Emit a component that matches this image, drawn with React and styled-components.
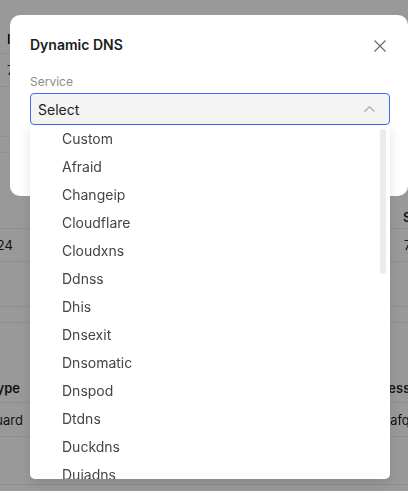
import React from 'react';
import styled, { createGlobalStyle } from 'styled-components';

const GlobalStyle = createGlobalStyle`
  html, body {
    margin: 0;
    padding: 0;
    overflow: hidden;
    background: #fff;
    font-family: Inter, "Noto Sans", sans-serif;
    color: #1f1f1f;
  }
`;

const services = [
  'Custom', 'Afraid', 'Changeip', 'Cloudflare', 'Cloudxns', 'Ddnss', 'Dhis',
  'Dnsexit', 'Dnsomatic', 'Dnspod', 'Dtdns', 'Duckdns', 'Duiadns', 'Dyndns1',
  'Dyndns2', 'Easydns', 'Freedns', 'Gandi', 'Godaddy', 'Googledomains', 'He',
  'Namecheap', 'Noip', 'Nsupdate', 'Ovh', 'Porkbun', 'Yandex', 'Zoneedit1',
];

// rows of the settings tables behind the dialog
const tableRows = [
  { h: 25 },
  { h: 29, line: true, head: true, left: { text: 'IP', at: 7 } },
  { h: 33, line: true, left: { text: '7', at: 7 } },
  { h: 50, line: true },
  { h: 16, line: true },
  { h: 52 },
  { h: 24, line: true, head: true, right: { text: 'Status', at: 403 } },
  { h: 33, line: true, left: { text: '10.8.0.1/24', end: 13 }, right: { text: '7 days', at: 404 } },
  { h: 45, line: true },
  { h: 16, line: true },
  { h: 50 },
  { h: 30, line: true, head: true, left: { text: 'Type', end: 20 }, right: { text: 'Address', at: 358 } },
  { h: 34, line: true, left: { text: 'Wireguard', end: 23 }, right: { text: 'kafqM2xVt', at: 383 } },
  { h: 48, line: true },
];

function BackgroundTable() {
  return (
    <Page>
      {tableRows.map((r, i) => (
        <TableRow key={i} $h={r.h} $line={r.line} $head={r.head}>
          {r.left && (
            r.left.end
              ? <EndCell $w={r.left.end}>{r.left.text}</EndCell>
              : <StartCell $x={r.left.at}>{r.left.text}</StartCell>
          )}
          {r.right && <StartCell $x={r.right.at}>{r.right.text}</StartCell>}
        </TableRow>
      ))}
    </Page>
  );
}

function CloseIcon() {
  return (
    <svg width="12" height="12" viewBox="0 0 12 12">
      <path d="M0.5 0.5 L11.5 11.5 M11.5 0.5 L0.5 11.5" stroke="#6b6b6b" strokeWidth="1.2" fill="none" />
    </svg>
  );
}

function ChevronUp() {
  return (
    <svg width="11" height="6" viewBox="0 0 11 6">
      <path d="M0.5 5.5 L5.5 0.8 L10.5 5.5" stroke="#a8a8a8" strokeWidth="1.2" fill="none" />
    </svg>
  );
}

export default function App() {
  return (
    <>
      <GlobalStyle />
      <BackgroundTable />
      <Overlay>
        <Modal>
          <ModalHeader>
            <Title>Dynamic DNS</Title>
            <CloseButton><CloseIcon /></CloseButton>
          </ModalHeader>
          <Label>Service</Label>
          <SelectWrap>
            <SelectBox>
              <span>Select</span>
              <ChevronUp />
            </SelectBox>
            <Dropdown>
              <OptionList>
                {services.map((s) => (
                  <Option key={s}>{s}</Option>
                ))}
              </OptionList>
              <ScrollThumb />
            </Dropdown>
          </SelectWrap>
        </Modal>
      </Overlay>
    </>
  );
}

const Page = styled.div`
  display: flex;
  flex-direction: column;
  width: 408px;
  font-size: 13px;
`;

const TableRow = styled.div`
  display: flex;
  align-items: center;
  height: ${p => p.$h}px;
  box-sizing: border-box;
  border-bottom: ${p => (p.$line ? '1px solid #ededed' : 'none')};
  font-weight: ${p => (p.$head ? 600 : 400)};
  white-space: nowrap;
`;

const StartCell = styled.div`
  position: fixed;
  left: ${p => p.$x}px;
`;

const EndCell = styled.div`
  display: flex;
  justify-content: flex-end;
  width: ${p => p.$w}px;
  flex-shrink: 0;
`;

const Overlay = styled.div`
  position: fixed;
  inset: 0;
  background: rgba(0, 0, 0, 0.4);
  display: flex;
  align-items: flex-start;
  padding: 15px 0 0 10px;
`;

const Modal = styled.div`
  width: 398px;
  box-sizing: border-box;
  background: #fff;
  border-radius: 10px;
  padding: 20px 18px 71px 20px;
`;

const ModalHeader = styled.div`
  display: flex;
  align-items: center;
  justify-content: space-between;
  height: 20px;
`;

const Title = styled.div`
  font-size: 14px;
  font-weight: 600;
  color: #1d1d1d;
  line-height: 20px;
`;

const CloseButton = styled.div`
  display: flex;
  margin: 2px 4px 0 0;
`;

const Label = styled.div`
  margin-top: 18px;
  font-size: 12px;
  line-height: 18px;
  color: #8c8c8c;
`;

const SelectWrap = styled.div`
  position: relative;
  margin-top: 2px;
`;

const SelectBox = styled.div`
  display: flex;
  align-items: center;
  justify-content: space-between;
  height: 32px;
  box-sizing: border-box;
  padding: 0 14px 0 7px;
  background: #f4f4f4;
  border: 1px solid #3d6df2;
  border-radius: 4px;
  font-size: 14px;
  color: #222;
`;

const Dropdown = styled.div`
  position: absolute;
  top: calc(100% + 1px);
  left: 0;
  right: 0;
  height: 353px;
  overflow: hidden;
  background: #fff;
  border-radius: 0 0 5px 5px;
  box-shadow: 0 4px 12px rgba(0, 0, 0, 0.12);
`;

/* list is scrolled a couple of pixels down */
const OptionList = styled.div`
  display: flex;
  flex-direction: column;
  margin-top: -2px;
`;

const Option = styled.div`
  height: 28px;
  flex-shrink: 0;
  display: flex;
  align-items: center;
  padding-left: 32px;
  font-size: 14px;
  color: #43434a;
`;

const ScrollThumb = styled.div`
  position: absolute;
  top: 3px;
  right: 4px;
  width: 6px;
  height: 145px;
  border-radius: 3px;
  background: #ececec;
`;
